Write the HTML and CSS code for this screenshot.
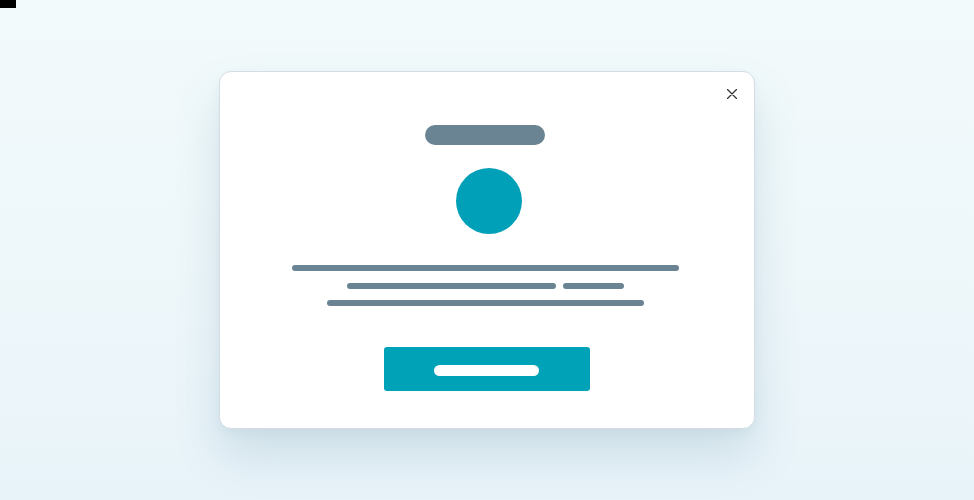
FILE: index.html
```html
<!DOCTYPE html>
<html lang="en">
<head>
<meta charset="utf-8">
<title>Modal</title>
<link rel="stylesheet" href="styles.css">
</head>
<body>
<div class="tick"></div>
<div class="stage">
  <div class="modal">
    <button class="close" aria-label="Close">
      <svg width="10" height="10" viewBox="0 0 10 10"><path d="M0.5 0.5 L9.5 9.5 M9.5 0.5 L0.5 9.5" stroke="#333" stroke-width="1.3" fill="none" stroke-linecap="round"/></svg>
    </button>
    <div class="title"></div>
    <div class="avatar"></div>
    <div class="lines">
      <div class="line l1"></div>
      <div class="row">
        <div class="line l2a"></div>
        <div class="line l2b"></div>
      </div>
      <div class="line l3"></div>
    </div>
    <div class="btn"><div class="btn-label"></div></div>
  </div>
</div>
</body>
</html>
```
FILE: styles.css
```css
html, body {
  margin: 0;
  padding: 0;
}
body {
  width: 974px;
  height: 500px;
  overflow: hidden;
  background: linear-gradient(180deg, #f2fafb 0%, #eef7fa 55%, #e8f3f9 100%);
  font-family: "Liberation Sans", sans-serif;
}
.tick {
  width: 16px;
  height: 8px;
  background: #000;
}
.stage {
  display: flex;
  justify-content: center;
  padding-top: 63px;
}
.modal {
  position: relative;
  box-sizing: border-box;
  width: 536px;
  height: 358px;
  background: #fff;
  border: 1px solid #d4dde5;
  border-radius: 12px;
  box-shadow: 0 26px 46px rgba(60, 110, 140, 0.17), 0 4px 10px rgba(60, 110, 140, 0.05);
  display: flex;
  flex-direction: column;
  align-items: center;
  padding: 53px 0 37px;
}
.close {
  position: absolute;
  top: 17px;
  right: 17px;
  width: 10px;
  height: 10px;
  padding: 0;
  border: 0;
  background: none;
  display: block;
}
.close svg { display: block; }
.title {
  width: 120px;
  height: 20px;
  border-radius: 10px;
  background: #6a8493;
  margin-right: 4px;
}
.avatar {
  width: 66px;
  height: 66px;
  border-radius: 50%;
  background: #00a1b8;
  margin-top: 23px;
  margin-left: 4px;
}
.lines {
  margin-top: 31px;
  display: flex;
  flex-direction: column;
  align-items: center;
  gap: 12px;
  margin-right: 3px;
}
.lines .row {
  display: flex;
  gap: 7px;
  margin-bottom: -1px;
}
.line {
  height: 6px;
  border-radius: 3px;
  background: #6a8493;
}
.l1 { width: 387px; }
.l2a { width: 209px; }
.l2b { width: 61px; }
.l3 { width: 317px; }
.btn {
  margin-top: 41px;
  width: 206px;
  height: 44px;
  border-radius: 3px;
  background: #00a2b8;
  display: flex;
  align-items: center;
  justify-content: center;
}
.btn-label {
  width: 105px;
  height: 11px;
  border-radius: 6px;
  background: #fff;
  margin-right: 1px;
  margin-top: 3px;
}
```
